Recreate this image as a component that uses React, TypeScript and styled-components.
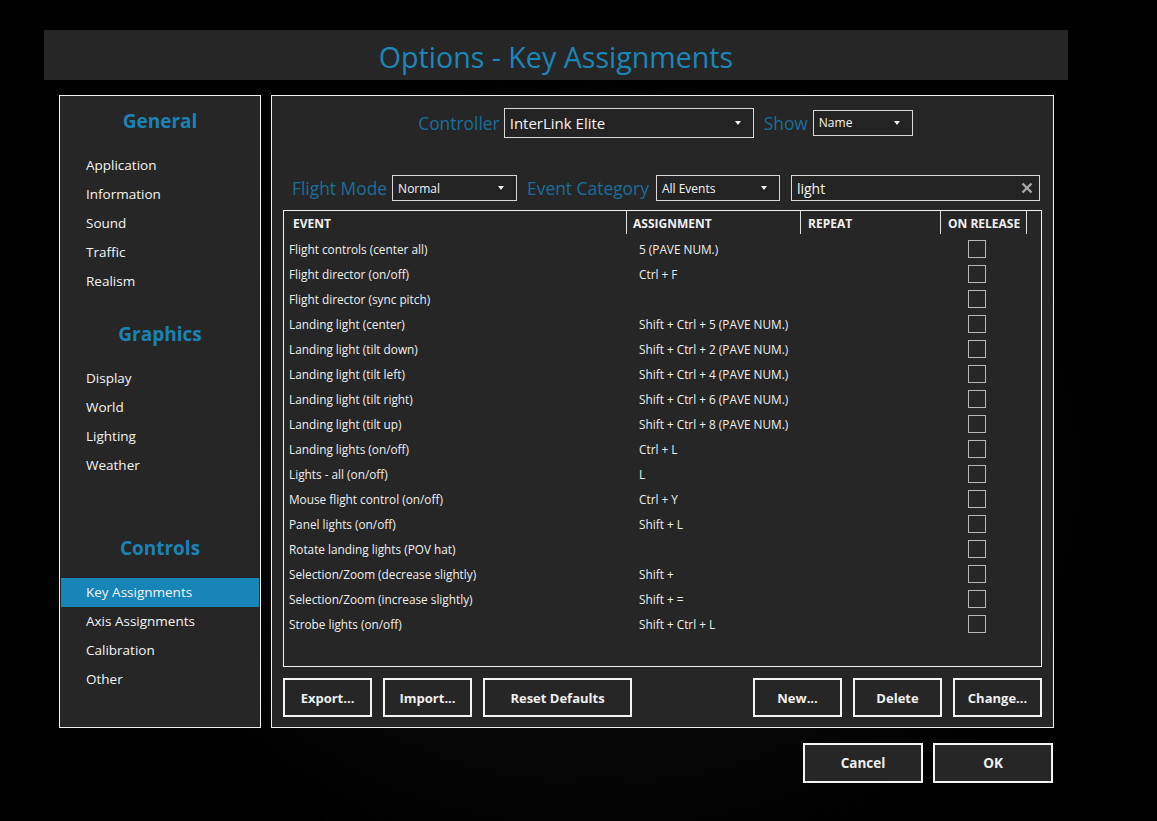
import React from "react";
import styled, { createGlobalStyle } from "styled-components";

const GlobalStyle = createGlobalStyle`
  html, body {
    margin: 0;
    padding: 0;
    background: #000;
  }
  body {
    font-family: "Open Sans", "Noto Sans", sans-serif;
    color: #f2f2f2;
  }
`;

const Page = styled.div`
  width: 1157px;
  height: 821px;
  box-sizing: border-box;
  padding: 30px 0 0 44px;
  background: radial-gradient(ellipse 520px 420px at 600px 470px, #141414 0%, #070707 60%, #000 100%);
  overflow: hidden;
`;

const Dialog = styled.div`
  width: 1024px;
  display: flex;
  flex-direction: column;
`;

const TitleBar = styled.div`
  height: 50px;
  background: #262626;
  display: flex;
  align-items: center;
  justify-content: center;
`;

const Title = styled.h1`
  margin: 2px 0 0 0;
  font-weight: 400;
  font-size: 28.6px;
  color: #1b87b9;
`;

const Body = styled.div`
  display: flex;
  gap: 10px;
  margin-top: 15px;
  padding-left: 15px;
`;

const Sidebar = styled.nav`
  width: 202px;
  height: 633px;
  box-sizing: border-box;
  border: 1px solid #f0f0f0;
  background: #262626;
  padding: 1px;
  display: flex;
  flex-direction: column;
`;

const Group = styled.div<{ $gap: number }>`
  margin-top: ${(p) => p.$gap}px;
  display: flex;
  flex-direction: column;
`;

const GroupTitle = styled.div`
  text-align: center;
  font-weight: 700;
  font-size: 19px;
  color: #1a82b4;
  height: 26px;
  line-height: 26px;
  margin-bottom: 17px;
`;

const NavItem = styled.div<{ $active?: boolean }>`
  height: 29px;
  line-height: 29px;
  padding-left: 25px;
  font-size: 13.5px;
  color: #f4f4f4;
  background: ${(p) => (p.$active ? "#1785b7" : "transparent")};
`;

const Main = styled.section`
  width: 783px;
  height: 633px;
  box-sizing: border-box;
  border: 1px solid #f0f0f0;
  background: #262626;
  padding: 12px 11px 10px 11px;
  display: flex;
  flex-direction: column;
`;

const TopRow = styled.div`
  display: flex;
  align-items: center;
  justify-content: center;
  height: 29px;
  padding-left: 6px;
`;

const FilterRow = styled.div`
  display: flex;
  align-items: center;
  height: 26px;
  margin-top: 38px;
  padding-left: 9px;
  padding-right: 2px;
`;

const Label = styled.span<{ $gap?: number; $after?: number }>`
  font-size: 17.4px;
  color: #1b6e9a;
  margin-right: ${(p) => p.$after ?? 6}px;
  margin-left: ${(p) => p.$gap ?? 0}px;
  white-space: nowrap;
`;

const Select = styled.div<{ $w: number; $h: number; $fs: number }>`
  width: ${(p) => p.$w}px;
  height: ${(p) => p.$h}px;
  box-sizing: border-box;
  border: 1px solid #d8d8d8;
  background: #232323;
  display: flex;
  align-items: center;
  justify-content: space-between;
  padding: 0 12px 0 5px;
  font-size: ${(p) => p.$fs}px;
  color: #f4f4f4;
`;

const Caret = styled.span`
  width: 0;
  height: 0;
  border-left: 3.5px solid transparent;
  border-right: 3.5px solid transparent;
  border-top: 4px solid #f0f0f0;
`;

const Search = styled.div`
  flex: 1;
  margin-left: 11px;
  height: 26px;
  box-sizing: border-box;
  border: 1px solid #d8d8d8;
  background: #232323;
  display: flex;
  align-items: center;
  justify-content: space-between;
  padding: 0 6px 0 5px;
  font-size: 14px;
  color: #f4f4f4;
`;

const Table = styled.div`
  margin-top: 9px;
  height: 457px;
  box-sizing: border-box;
  border: 1px solid #f0f0f0;
  display: flex;
  flex-direction: column;
`;

const cols = "342px 174px 140px 86px 14px";

const HeaderRow = styled.div`
  display: grid;
  grid-template-columns: ${cols};
  height: 25px;
`;

const HeadCell = styled.div<{ $pad: number; $sep?: boolean }>`
  box-sizing: border-box;
  padding-left: ${(p) => p.$pad}px;
  border-left: ${(p) => (p.$sep ? "1px solid #e0e0e0" : "none")};
  height: 23px;
  line-height: 25px;
  font-size: 12px;
  font-weight: 700;
  color: #f0f0f0;
  white-space: nowrap;
`;

const Row = styled.div`
  display: grid;
  grid-template-columns: ${cols};
  height: 25px;
  align-items: center;
  font-size: 11.8px;
  color: #f0f0f0;
`;

const Cell = styled.div<{ $pad: number }>`
  padding-left: ${(p) => p.$pad}px;
  white-space: nowrap;
`;

const CheckCell = styled.div`
  padding-left: 28px;
  display: flex;
  align-items: center;
`;

const Check = styled.span`
  width: 18px;
  height: 18px;
  box-sizing: border-box;
  border: 1px solid #b8b8b8;
`;

const ButtonRow = styled.div`
  display: flex;
  gap: 11px;
  margin-top: 11px;
`;

const Spacer = styled.div`
  flex: 1;
`;

const Button = styled.button<{ $w: number; $h?: number }>`
  width: ${(p) => p.$w}px;
  height: ${(p) => p.$h ?? 39}px;
  box-sizing: border-box;
  border: 2px solid #f4f4f4;
  background: #262626;
  color: #efefef;
  font-family: inherit;
  font-weight: 700;
  font-size: 13px;
  padding: 0;
`;

const Footer = styled.div`
  display: flex;
  justify-content: flex-end;
  gap: 10px;
  margin-top: 15px;
  padding-right: 15px;
`;

const FooterButton = styled(Button)`
  font-size: 13.5px;
`;

const events: [string, string][] = [
  ["Flight controls (center all)", "5 (PAVE NUM.)"],
  ["Flight director (on/off)", "Ctrl + F"],
  ["Flight director (sync pitch)", ""],
  ["Landing light (center)", "Shift + Ctrl + 5 (PAVE NUM.)"],
  ["Landing light (tilt down)", "Shift + Ctrl + 2 (PAVE NUM.)"],
  ["Landing light (tilt left)", "Shift + Ctrl + 4 (PAVE NUM.)"],
  ["Landing light (tilt right)", "Shift + Ctrl + 6 (PAVE NUM.)"],
  ["Landing light (tilt up)", "Shift + Ctrl + 8 (PAVE NUM.)"],
  ["Landing lights (on/off)", "Ctrl + L"],
  ["Lights - all (on/off)", "L"],
  ["Mouse flight control (on/off)", "Ctrl + Y"],
  ["Panel lights (on/off)", "Shift + L"],
  ["Rotate landing lights (POV hat)", ""],
  ["Selection/Zoom (decrease slightly)", "Shift +"],
  ["Selection/Zoom (increase slightly)", "Shift + ="],
  ["Strobe lights (on/off)", "Shift + Ctrl + L"],
];

const ClearIcon = () => (
  <svg width="12" height="12" viewBox="0 0 12 12">
    <path d="M1.5 1.5 L10.5 10.5 M10.5 1.5 L1.5 10.5" stroke="#a8a8a8" strokeWidth="2.4" />
  </svg>
);

export default function App() {
  return (
    <Page>
      <GlobalStyle />
      <Dialog>
        <TitleBar>
          <Title>Options - Key Assignments</Title>
        </TitleBar>
        <Body>
          <Sidebar>
            <Group $gap={11}>
              <GroupTitle>General</GroupTitle>
              {["Application", "Information", "Sound", "Traffic", "Realism"].map((t) => (
                <NavItem key={t}>{t}</NavItem>
              ))}
            </Group>
            <Group $gap={25}>
              <GroupTitle>Graphics</GroupTitle>
              {["Display", "World", "Lighting", "Weather"].map((t) => (
                <NavItem key={t}>{t}</NavItem>
              ))}
            </Group>
            <Group $gap={55}>
              <GroupTitle>Controls</GroupTitle>
              <NavItem $active>Key Assignments</NavItem>
              {["Axis Assignments", "Calibration", "Other"].map((t) => (
                <NavItem key={t}>{t}</NavItem>
              ))}
            </Group>
          </Sidebar>
          <Main>
            <TopRow>
              <Label $after={4}>Controller</Label>
              <Select $w={250} $h={30} $fs={15}>
                InterLink Elite
                <Caret />
              </Select>
              <Label $gap={10} $after={5}>Show</Label>
              <Select $w={100} $h={26} $fs={12}>
                Name
                <Caret />
              </Select>
            </TopRow>
            <FilterRow>
              <Label $after={5}>Flight Mode</Label>
              <Select $w={125} $h={26} $fs={12}>
                Normal
                <Caret />
              </Select>
              <Label $gap={10} $after={7}>Event Category</Label>
              <Select $w={124} $h={26} $fs={12}>
                All Events
                <Caret />
              </Select>
              <Search>
                light
                <ClearIcon />
              </Search>
            </FilterRow>
            <Table>
              <HeaderRow>
                <HeadCell $pad={9}>EVENT</HeadCell>
                <HeadCell $pad={6} $sep>ASSIGNMENT</HeadCell>
                <HeadCell $pad={7} $sep>REPEAT</HeadCell>
                <HeadCell $pad={7} $sep>ON RELEASE</HeadCell>
                <HeadCell $pad={0} $sep />
              </HeaderRow>
              {events.map(([name, key]) => (
                <Row key={name}>
                  <Cell $pad={5}>{name}</Cell>
                  <Cell $pad={13}>{key}</Cell>
                  <Cell $pad={0} />
                  <CheckCell>
                    <Check />
                  </CheckCell>
                  <Cell $pad={0} />
                </Row>
              ))}
            </Table>
            <ButtonRow>
              <Button $w={89}>Export...</Button>
              <Button $w={89}>Import...</Button>
              <Button $w={149}>Reset Defaults</Button>
              <Spacer />
              <Button $w={89}>New...</Button>
              <Button $w={89}>Delete</Button>
              <Button $w={89}>Change...</Button>
            </ButtonRow>
          </Main>
        </Body>
        <Footer>
          <FooterButton $w={120} $h={40}>Cancel</FooterButton>
          <FooterButton $w={120} $h={40}>OK</FooterButton>
        </Footer>
      </Dialog>
    </Page>
  );
}
